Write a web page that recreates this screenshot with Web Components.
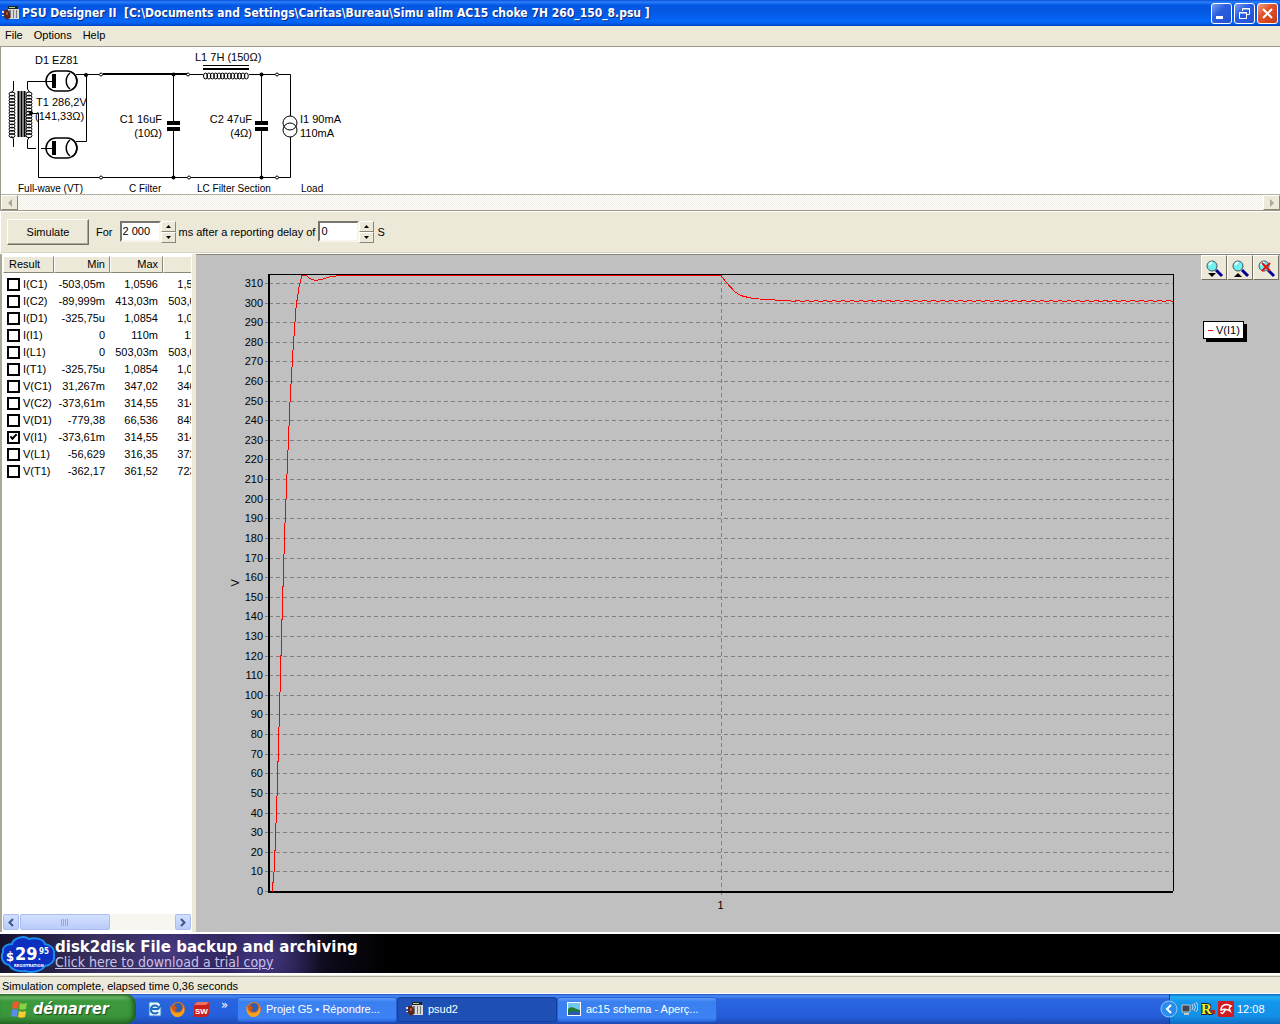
<!DOCTYPE html>
<html lang="fr">
<head>
<meta charset="utf-8">
<title>PSU Designer II</title>
<style>
  html, body { height: 100%; margin: 0; }
  body {
    display: flex;
    flex-direction: column;
    background: #ece9d8;
    color: #000;
    font-family: "Liberation Sans", Arial, sans-serif;
    font-size: 11px;
    line-height: 14px;
    overflow: hidden;
    --ui: "DejaVu Sans Condensed", "DejaVu Sans", sans-serif;
  }
  main { flex: 1; display: flex; min-height: 0; border-top: 1px solid #fff; }
  psu-chart { flex: 1; min-width: 0; }
</style>
</head>
<body>
<psu-titlebar>PSU Designer II  [C:\Documents and Settings\Caritas\Bureau\Simu alim AC15 choke 7H 260_150_8.psu ]</psu-titlebar>
<psu-menu></psu-menu>
<psu-schematic></psu-schematic>
<psu-toolbar></psu-toolbar>
<main>
  <psu-results></psu-results>
  <psu-chart></psu-chart>
</main>
<psu-banner></psu-banner>
<psu-status>Simulation complete, elapsed time 0,36 seconds</psu-status>
<xp-taskbar></xp-taskbar>

<script>
const psuIcon = `<svg width="18" height="18" viewBox="0 0 18 18">
  <path d="M6 2h10v3H6z" fill="#222"/><path d="M7 3h6v1H7z" fill="#9fd0a0"/>
  <path d="M6 5h11v10H6z" fill="#d8d8d8"/><path d="M7 6h2v8H7zM11 6h1v8h-1zM14 6h1v8h-1z" fill="#777"/>
  <path d="M0 7h3v2H0zM0 11h3v1H0z" fill="#ddd"/><path d="M2 6h4l2 3v5l-3 2-3-3z" fill="#5b241c"/>
  <path d="M4 8h2v3H4z" fill="#a5543c"/></svg>`;

const firefoxIcon = `<svg width="16" height="16" viewBox="0 0 16 16">
  <circle cx="8" cy="8" r="7" fill="#e8731a"/><circle cx="8" cy="6.500" r="4.500" fill="#2f5fb0"/>
  <path d="M1 4c0 7 3 9 7 8 4 0 5-3 5-6 2 2 2 9-5 10C2 16-1 10 1 4z" fill="#f6a21d"/>
  <path d="M2 5c2-1 4 0 5 2l-2 3c-2 0-3-2-3-5z" fill="#d94f12"/></svg>`;

class BaseElement extends HTMLElement {
  connectedCallback() {
    if (!this.shadowRoot) {
      this.attachShadow({ mode: 'open' });
      this.shadowRoot.innerHTML = this.render();
    }
    if (this.ready) this.ready();
  }
}

class PsuTitlebar extends BaseElement {
  render() {
    return `
      <style>
        :host {
          display: flex;
          align-items: center;
          height: 26px;
          flex: none;
          box-sizing: border-box;
          padding: 0 2px;
          color: #fff;
          background: linear-gradient(#0a4fd8, #2a80fb 2px, #0558e4 5px, #0557e2 11px, #0467f8 21px, #0560f0 23px, #0344c0);
        }
        h1 {
          flex: 1;
          margin: 0 0 0 2px;
          font: bold 12px/16px var(--ui);
          white-space: pre;
          text-shadow: 1px 1px 0 #0f2a80;
        }
        button {
          width: 21px;
          height: 21px;
          margin-left: 2px;
          padding: 0;
          border: 1px solid #fff;
          border-radius: 3px;
          background: linear-gradient(135deg, #7d9ff0, #2a5fe0 40%, #2450d0);
        }
        .close { background: linear-gradient(135deg, #f0a080, #e0532c 40%, #c83a14); }
        svg { display: block; }
      </style>
      ${psuIcon}
      <h1><slot></slot></h1>
      <button aria-label="Minimize"><svg width="19" height="19"><path d="M4 12h7v3H4z" fill="#fff"/></svg></button>
      <button aria-label="Restore"><svg width="19" height="19" fill="none" stroke="#fff"><path d="M7.500 7V4.500h7v6H12M7 5h8M4.500 8.500h7v6h-7zM4 9h8"/></svg></button>
      <button class="close" aria-label="Close"><svg width="19" height="19" stroke="#fff" stroke-width="2"><path d="M5 5l9 9M14 5l-9 9"/></svg></button>
    `;
  }
}

class PsuMenu extends BaseElement {
  render() {
    return `
      <style>
        :host { display: flex; flex: none; height: 18px; align-items: center; gap: 11px; padding: 0 5px 2px; }
        button { border: 0; padding: 0; background: none; color: inherit; font: 11px/14px "Liberation Sans", sans-serif; }
      </style>
      <button>File</button><button>Options</button><button>Help</button>
    `;
  }
}

class PsuSchematic extends BaseElement {
  // a row or column of small overlapping loops
  coil(x, y, count, step, rx, ry, vertical) {
    let out = '';
    for (let i = 0; i < count; i++) {
      const cx = vertical ? x : x + i * step;
      const cy = vertical ? y + i * step : y;
      out += `<ellipse cx="${cx}" cy="${cy}" rx="${rx}" ry="${ry}"/>`;
    }
    return out;
  }

  tube(y) {
    return `<rect x="46" y="${y - 10}" width="31" height="20" rx="10" fill="#fff" stroke-width="1.500"/>
      <rect x="52" y="${y - 7}" width="4" height="14" fill="#000" stroke="none"/>
      <path d="M41 ${y + 0.5}H52"/>
      <path d="M70 ${y - 8}c-5 4-5 12 0 16M73 ${y - 8}c5 4 5 12 0 16" stroke-width="1.500"/>`;
  }

  cap(x) {
    return `<path d="M${x} 74.500V121M${x} 131V177.500"/>
      <path d="M${x - 6.5} 121h13v4h-13zM${x - 6.5} 127h13v4h-13z" fill="#000" stroke="none"/>`;
  }

  render() {
    const nodes = [[101, 74], [188, 74], [277, 74], [101, 177], [189, 177], [277, 177]];
    const joints = [[86, 75], [173.5, 74.5], [261.5, 74.5], [31, 113], [173.5, 177.5], [261.5, 177.5]];
    return `
      <style>
        :host { display: block; flex: none; background: #fff; border-top: 1px solid #9d9a8c; border-left: 1px solid #9d9a8c; }
        .view { display: block; }
        text { font: 11px "Liberation Sans", sans-serif; fill: #000; stroke: none; }
        .names text { font-size: 10px; }
        .track {
          display: flex;
          justify-content: space-between;
          height: 15px;
          border-top: 1px solid #b5b2a4;
          border-bottom: 1px solid #9d9a8c;
          background: repeating-conic-gradient(#fff 0 25%, #f0eee2 0 50%) 0 0 / 2px 2px;
        }
        button {
          width: 17px;
          padding: 0;
          background: #ece9d8;
          border: 1px solid;
          border-color: #fff #8a8778 #8a8778 #fff;
          display: grid;
          place-items: center;
        }
      </style>
      <svg class="view" width="360" height="147" viewBox="1 47 360 147" fill="none" stroke="#000">
        <path d="M76 74.500H99M190 74.500h13M249 74.500h26M279 74.500h11.500V116M290.500 137v40.500H279"/>
        <path d="M103 74H187" stroke-width="2"/>
        <path d="M86.500 74v67.500H76M13.500 81v9l-2 3M13.500 147v-8l-2-3M41 81.500H27.500V89l2 3M36 148.500h-8.500V140l2-3M31 113.500h7.500v64H99M103 177.500H187M191 177.500h84"/>
        <path d="M18.500 91v46M21.500 91v46M24.500 91v46" stroke-width="2"/>
        ${this.coil(12, 94, 14, 3.2, 3, 2, true)}
        ${this.coil(29, 94, 14, 3.2, 3, 2, true)}
        ${this.tube(81)}${this.tube(148)}
        ${this.cap(173.5)}${this.cap(261.5)}
        <path d="M203 65.500h46"/><path d="M203 69h46" stroke-width="2"/>
        ${this.coil(205.5, 76, 13, 3.4, 2, 3, false)}
        <circle cx="290" cy="123" r="7"/><circle cx="290" cy="130" r="7"/>
        ${nodes.map(n => `<circle cx="${n[0]}" cy="${n[1] + 0.5}" r="1.500" fill="#fff"/>`).join('')}
        ${joints.map(n => `<circle cx="${n[0]}" cy="${n[1]}" r="2" fill="#000" stroke="none"/>`).join('')}
        <text x="35" y="64">D1 EZ81</text>
        <text x="36" y="106">T1 286,2V</text>
        <text x="35" y="120">(141,33Ω)</text>
        <g text-anchor="end">
          <text x="162" y="123">C1 16uF</text><text x="162" y="137">(10Ω)</text>
          <text x="252" y="123">C2 47uF</text><text x="252" y="137">(4Ω)</text>
        </g>
        <text x="195" y="61">L1 7H (150Ω)</text>
        <text x="300" y="123">I1 90mA</text><text x="300" y="137">110mA</text>
        <g class="names">
          <text x="18" y="192">Full-wave (VT)</text>
          <text x="129" y="192">C Filter</text>
          <text x="197" y="192">LC Filter Section</text>
          <text x="301" y="192">Load</text>
        </g>
      </svg>
      <div class="track">
        <button aria-label="Scroll left"><svg width="4" height="8"><path d="M4 0v8L0 4z" fill="#aca899"/></svg></button>
        <button aria-label="Scroll right"><svg width="4" height="8"><path d="M0 0v8l4-4z" fill="#aca899"/></svg></button>
      </div>
    `;
  }
}

class SpinField extends BaseElement {
  render() {
    return `
      <style>
        :host { display: flex; }
        input {
          width: 41px;
          height: 21px;
          box-sizing: border-box;
          padding: 0 1px 1px;
          border: 2px solid;
          border-color: #77746a #f6f5ee #f6f5ee #77746a;
          background: #fff;
          font: 11px/16px "Liberation Sans", sans-serif;
        }
        div { display: flex; flex-direction: column; }
        button {
          width: 15px;
          height: 11px;
          padding: 0;
          display: grid;
          place-items: center;
          background: #ece9d8;
          border: 1px solid;
          border-color: #fff #8a8778 #8a8778 #fff;
        }
      </style>
      <input aria-label="${this.getAttribute('label')}" value="${this.getAttribute('value')}">
      <div>
        <button aria-label="Up"><svg width="5" height="3"><path d="M0 3h5L2.500 0z"/></svg></button>
        <button aria-label="Down"><svg width="5" height="3"><path d="M0 0h5L2.500 3z"/></svg></button>
      </div>
    `;
  }
}

class PsuToolbar extends BaseElement {
  render() {
    return `
      <style>
        :host {
          display: flex;
          flex: none;
          align-items: center;
          gap: 3px;
          box-sizing: border-box;
          height: 42px;
          padding: 0 0 0 6px;
          border-top: 1px solid #fff;
          border-left: 1px solid #fff;
          border-bottom: 1px solid #d8d5c5;
        }
        .run {
          width: 82px;
          height: 26px;
          background: #ece9d8;
          border: 1px solid;
          border-color: #fff #716f64 #716f64 #fff;
          box-shadow: inset -1px -1px #aca899;
          font: 11px/14px "Liberation Sans", sans-serif;
        }
        .for { margin: 0 4px; }
      </style>
      <button class="run">Simulate</button>
      <span class="for">For</span>
      <spin-field label="Duration in ms" value="2 000"></spin-field>
      <span>ms</span>
      <span>after a reporting delay of</span>
      <spin-field label="Reporting delay in seconds" value="0"></spin-field>
      <span>S</span>
    `;
  }
}

class PsuResults extends BaseElement {
  render() {
    const rows = [
      ['I(C1)', '-503,05m', '1,0596', '1,5627'],
      ['I(C2)', '-89,999m', '413,03m', '503,03m'],
      ['I(D1)', '-325,75u', '1,0854', '1,0857'],
      ['I(I1)', '0', '110m', '110m'],
      ['I(L1)', '0', '503,03m', '503,03m'],
      ['I(T1)', '-325,75u', '1,0854', '1,0857'],
      ['V(C1)', '31,267m', '347,02', '346,99'],
      ['V(C2)', '-373,61m', '314,55', '314,92'],
      ['V(D1)', '-779,38', '66,536', '845,92'],
      ['V(I1)', '-373,61m', '314,55', '314,92'],
      ['V(L1)', '-56,629', '316,35', '372,98'],
      ['V(T1)', '-362,17', '361,52', '723,69']
    ];
    return `
      <style>
        :host {
          display: flex;
          flex-direction: column;
          box-sizing: border-box;
          width: 196px;
          padding: 2px 5px 2px 1px;
          border-left: 2px solid #aca899;
          background: linear-gradient(90deg, #fff 190px, #ece9d8 0);
        }
        .clip { flex: 1; min-height: 0; overflow: hidden; background: #fff; }
        table { width: 213px; table-layout: fixed; border-collapse: separate; border-spacing: 0; }
        th, td { height: 17px; box-sizing: border-box; padding: 0 5px 0 0; text-align: right; font-weight: normal; white-space: nowrap; line-height: 15px; }
        th {
          background: #ece9d8;
          border: 1px solid;
          border-color: #fff #8a8778 #8a8778 #fff;
          padding-right: 4px;
        }
        th:first-child { text-align: left; padding-left: 5px; }
        td:first-child { text-align: left; padding: 0 0 0 4px; }
        tbody::before { content: ""; display: block; height: 3px; }
        label { display: flex; align-items: center; gap: 3px; }
        input {
          appearance: none;
          flex: none;
          width: 13px;
          height: 13px;
          margin: 0;
          border: 2px solid #000;
          background: #fff;
        }
        input:checked::after {
          content: "";
          display: block;
          box-sizing: border-box;
          width: 7px;
          height: 4px;
          margin: 1px;
          border: solid #000;
          border-width: 0 0 2px 2px;
          transform: rotate(-45deg);
        }
        .scroll { display: flex; height: 16px; background: #f7f6f0; gap: 1px; }
        button {
          width: 16px;
          height: 16px;
          padding: 0;
          display: grid;
          place-items: center;
          border: 1px solid #a9bdf0;
          border-radius: 2px;
          background: linear-gradient(#d4e0ff, #b8ccf8);
        }
        .thumb { width: 90px; flex: none; }
        .scroll button:last-child { margin-left: auto; }
      </style>
      <div class="clip">
        <table>
          <colgroup><col style="width:51px"><col style="width:56px"><col style="width:53px"><col></colgroup>
          <thead><tr><th>Result</th><th>Min</th><th>Max</th><th>Diff</th></tr></thead>
          <tbody>
            ${rows.map(r => `<tr>
              <td><label><input type="checkbox" ${r[0] === 'V(I1)' ? 'checked' : ''}>${r[0]}</label></td>
              <td>${r[1]}</td><td>${r[2]}</td><td>${r[3]}</td>
            </tr>`).join('')}
          </tbody>
        </table>
      </div>
      <div class="scroll">
        <button aria-label="Scroll left"><svg width="6" height="9" fill="none" stroke="#3f5590" stroke-width="2"><path d="M5 1L1.500 4.500 5 8"/></svg></button>
        <button class="thumb" aria-label="Scroll thumb"><svg width="9" height="7" stroke="#8ca6e8"><path d="M.5 0v7M2.500 0v7M4.500 0v7M6.500 0v7"/></svg></button>
        <button aria-label="Scroll right"><svg width="6" height="9" fill="none" stroke="#3f5590" stroke-width="2"><path d="M1 1l3.500 3.500L1 8"/></svg></button>
      </div>
    `;
  }
}

class PsuChart extends BaseElement {
  render() {
    const lens = extra => `<svg width="22" height="22" viewBox="0 0 22 22">
      <path d="M13 13l6 6" stroke="#000090" stroke-width="3"/>
      <circle cx="9" cy="9" r="5" fill="#6ff0f0" stroke="#456" />
      <path d="M6 8l3-3" stroke="#fff" stroke-width="2"/>${extra}</svg>`;
    return `
      <style>
        :host { display: flex; background: #c0c0c0; border-top: 1px solid #8a8778; box-sizing: border-box; }
        .plot { flex: 1; min-width: 0; overflow: hidden; }
        .plot svg { display: block; width: 100%; height: 100%; }
        .side { width: 79px; }
        .tools { display: flex; }
        .tools button {
          width: 26px;
          height: 25px;
          padding: 0;
          display: grid;
          place-items: center;
          background: #ece9d8;
          border: 1px solid;
          border-color: #fff #716f64 #716f64 #fff;
        }
        .legend {
          display: inline-flex;
          align-items: center;
          gap: 3px;
          margin: 41px 0 0 2px;
          padding: 1px 3px 1px 4px;
          border: 1px solid #000;
          background: #fff;
          box-shadow: 3px 3px #000;
        }
        .legend i { width: 5px; height: 1px; background: #f00; }
        text { font: 11px "Liberation Sans", sans-serif; }
      </style>
      <div class="plot"><svg></svg></div>
      <div class="side">
        <div class="tools">
          <button aria-label="Zoom out">${lens('<path d="M5 16h8l-4 4z"/>')}</button>
          <button aria-label="Zoom in">${lens('<path d="M5 20h8l-4-4z"/>')}</button>
          <button aria-label="Reset zoom">${lens('<path d="M7 6l8 8M15 6l-8 8" stroke="#e01010" stroke-width="2"/>')}</button>
        </div>
        <div class="legend"><i></i>V(I1)</div>
      </div>
    `;
  }

  ready() {
    this.draw();
    this.observer = new ResizeObserver(() => this.draw());
    this.observer.observe(this);
  }

  draw() {
    const svg = this.shadowRoot.querySelector('.plot svg');
    const box = svg.parentNode.getBoundingClientRect();
    const left = 73, top = 19;
    const right = Math.round(box.width) - 28;
    const bottom = Math.round(box.height) - 41;
    const max = 314.55;
    const px = t => left + (right - left) * t / 2;
    const py = v => bottom - (bottom - top) * v / max;

    let grid = '', labels = '';
    for (let v = 0; v <= 310; v += 10) {
      const y = Math.round(py(v)) + 0.5;
      grid += `<path d="M${left - 4} ${y}h4" stroke="#808080"/><path d="M${left} ${y}H${right}" stroke="#808080" stroke-dasharray="4 3"/>`;
      labels += `<text x="${left - 6}" y="${y + 3.5}" text-anchor="end">${v}</text>`;
    }

    // start-up, slight overshoot, then the load step at 1 s
    const curve = [
      [0.007, 0], [0.012, 12], [0.018, 50], [0.024, 98], [0.029, 140], [0.035, 185], [0.042, 225],
      [0.047, 252], [0.053, 276], [0.06, 298], [0.067, 309], [0.073, 314], [0.082, 314],
      [0.09, 312.5], [0.102, 311.5], [0.117, 312], [0.135, 313.3], [0.16, 314], [1, 314],
      [1.01, 311], [1.02, 308.4], [1.03, 306], [1.043, 304], [1.07, 302.3], [1.1, 301.6], [1.14, 301.4]
    ];
    for (let i = 115; i <= 200; i++) curve.push([i / 100, i % 2 ? 301.4 : 300.9]);
    const line = curve.map(p => `${px(p[0]).toFixed(1)},${Math.round(py(p[1])) + 0.5}`).join(' ');
    const mid = Math.round(px(1)) + 0.5;

    svg.innerHTML = `
      <g shape-rendering="crispEdges">${grid}
        <path d="M${mid} ${top}V${bottom}" stroke="#808080" stroke-dasharray="4 3"/>
        <path d="M${mid} ${bottom}v4" stroke="#808080"/>
        <path d="M${left} ${top + 0.5}H${right + 0.5}V${bottom}" fill="none" stroke="#000"/>
        <path d="M${left} ${top}V${bottom + 1}H${right}" fill="none" stroke="#000" stroke-width="2"/>
      </g>
      <polyline points="${line}" fill="none" stroke="#f00" shape-rendering="crispEdges"/>
      ${labels}
      <text x="${mid - 1}" y="${bottom + 18}" text-anchor="middle">1</text>
      <text transform="translate(${left - 30} ${(top + bottom) / 2 + 4}) rotate(-90)">V</text>
    `;
  }
}

class PsuBanner extends BaseElement {
  render() {
    return `
      <style>
        :host {
          display: flex;
          flex: none;
          align-items: center;
          height: 39px;
          border-top: 2px solid #fff;
          border-bottom: 2px solid #fff;
          background:
            radial-gradient(ellipse 60px 40px at 170px 16px, #56459c99, transparent),
            radial-gradient(ellipse 50px 40px at 270px 24px, #4f3f9499, transparent),
            linear-gradient(90deg, #16122c, #3a3160 100px, #2b2458 200px, #332a68 260px, #0c0a18 330px, #000 390px);
          color: #fff;
        }
        a { display: flex; align-items: center; color: inherit; text-decoration: none; }
        .logo { flex: none; }
        .copy { padding-top: 2px; }
        strong { display: block; font: bold 15px/14px "DejaVu Sans", sans-serif; white-space: nowrap; }
        u { display: block; font: 14px/16px var(--ui); color: #c8c2e8; white-space: nowrap; }
        text { font-family: var(--ui); font-weight: bold; fill: #fff; }
      </style>
      <a href="#">
        <svg class="logo" width="55" height="38" viewBox="0 0 55 38">
          <path d="M3 17C2 11 8 9 12 9c1-6 12-9 17-5 6-2 15 0 16 5 6 1 10 5 9 11 1 6-3 10-9 11-4 6-14 7-20 5-8 1-14-2-16-6-6-1-9-7-6-13z" fill="#0b2fc0" stroke="#1b8cf0" stroke-width="2"/>
          <text x="6" y="26" font-size="13">$</text>
          <text x="15" y="25" font-size="18">29</text>
          <text x="39" y="19" font-size="8">95</text>
          <text x="38" y="25" font-size="8">.</text>
          <text x="14" y="32" font-size="4">REGISTRATION</text>
        </svg>
        <span class="copy"><strong>disk2disk File backup and archiving</strong><u>Click here to download a trial copy</u></span>
      </a>
    `;
  }
}

class PsuStatus extends BaseElement {
  render() {
    return `
      <style>
        :host {
          display: block;
          flex: none;
          height: 16px;
          margin-top: 1px;
          padding-left: 2px;
          border-top: 1px solid #aca899;
          border-bottom: 1px solid #fff;
          line-height: 18px;
        }
      </style>
      <slot></slot>
    `;
  }
}

class XpTask extends BaseElement {
  render() {
    return `
      <style>
        :host { display: block; width: 160px; }
        button {
          display: flex;
          align-items: center;
          gap: 4px;
          width: 100%;
          height: 25px;
          padding: 0 8px;
          border: 1px solid #2a62d8;
          border-radius: 3px;
          background: linear-gradient(#5a9cf8, #3a80f0 4px, #3c82f4 20px, #2c6ce0);
          color: #fff;
          font: 11px/14px "Liberation Sans", sans-serif;
          white-space: nowrap;
        }
        :host([active]) button { background: #1e4fb4; border-color: #143c98; }
      </style>
      <button><slot name="icon"></slot><slot></slot></button>
    `;
  }
}

class XpTaskbar extends BaseElement {
  render() {
    return `
      <style>
        :host {
          display: flex;
          flex: none;
          align-items: center;
          height: 30px;
          background: linear-gradient(#1f4fc0, #4a8cf4 2px, #2b66e0 5px, #245edb 22px, #1c48b0);
          color: #fff;
        }
        .start {
          display: flex;
          align-items: center;
          gap: 4px;
          width: 136px;
          height: 30px;
          padding: 0 0 0 10px;
          border: 0;
          border-radius: 0 10px 10px 0;
          background: linear-gradient(#2f7a2f, #6bb86b 3px, #3c9a3c 7px, #3a953a 22px, #2a702a);
          box-shadow: inset -3px 0 4px #1e5c1e;
          color: #fff;
          font: italic bold 16px/20px "DejaVu Sans Condensed", sans-serif;
          text-shadow: 1px 1px 1px #1c4a1c;
        }
        .quick { display: flex; align-items: center; gap: 7px; width: 90px; padding-left: 11px; }
        .quick span { align-self: flex-start; margin-left: 4px; font: 13px/8px var(--ui); }
        .tray {
          display: flex;
          align-items: center;
          gap: 3px;
          margin-left: auto;
          box-sizing: border-box;
          width: 111px;
          height: 30px;
          border-left: 1px solid #0c3e98;
          background: linear-gradient(#0c6ac8, #24b0f4 3px, #1396ec 8px, #1290e8 22px, #0f6cc0);
        }
        .tray svg:first-child { margin-left: -10px; }
        text { font-weight: bold; }
      </style>
      <button class="start">
        <svg width="19" height="19" viewBox="0 0 19 19">
          <path d="M3 2c2-1 4-1 6 0L8 9c-2-1-4-1-6 0z" fill="#ee5a2a"/><path d="M10 3c2 1 4 1 7 0l-1 6c-3 1-5 1-7 0z" fill="#8cd040"/>
          <path d="M2 10c2-1 4-1 6 0l-1 7c-2-1-4-1-6 0z" fill="#5a8cf0"/><path d="M9 11c2 1 4 1 7 0l-1 6c-3 1-5 1-7 0z" fill="#fccc30"/>
        </svg>démarrer
      </button>
      <div class="quick">
        <svg width="16" height="16" viewBox="0 0 16 16"><path d="M2 1h9l3 3v11H2z" fill="#e8f4ff" stroke="#2a7cc8"/><path d="M11 6a4 4 0 1 0 0 5M5 8h6l4-5" fill="none" stroke="#1c6cc0" stroke-width="2"/></svg>
        ${firefoxIcon}
        <svg width="17" height="17" viewBox="0 0 17 17"><path d="M1 4l3-3h12v12l-3 3H1z" fill="#c8201c"/><path d="M1 4l3-3h12l-3 3z" fill="#f07060"/><text x="2" y="13" font-size="8" fill="#fff">SW</text></svg>
        <span>»</span>
      </div>
      <xp-task>${firefoxIcon.replace('<svg', '<svg slot="icon"')}Projet G5 • Répondre...</xp-task>
      <xp-task active>${psuIcon.replace('<svg', '<svg slot="icon"')}psud2</xp-task>
      <xp-task><svg slot="icon" width="16" height="16" viewBox="0 0 16 16"><path d="M1 1h14v14H1z" fill="#fff"/><path d="M2 2h12v12H2z" fill="#70c8f0"/><path d="M2 8c4-4 6 0 12 1v5H2z" fill="#207a30"/><path d="M2 12c5-3 8 0 12-2v4H2z" fill="#2a58b0"/></svg>ac15 schema - Aperç...</xp-task>
      <div class="tray">
        <svg width="18" height="18" viewBox="0 0 18 18"><circle cx="9" cy="9" r="8" fill="#2a8cec" stroke="#8cc8fc"/><path d="M11 5L7 9l4 4" fill="none" stroke="#fff" stroke-width="2"/></svg>
        <svg width="17" height="16" viewBox="0 0 17 16"><path d="M1 4h8v7H1z" fill="#445" stroke="#bcc"/><path d="M3 12h5v2H3z" fill="#bcc"/><path d="M11 3q2 3 0 6M13 2q3 4 0 8M15 1q4 5 0 10" fill="none" stroke="#c8d8e8"/></svg>
        <svg width="14" height="16" viewBox="0 0 14 16"><text x="0" y="13" font-size="15" font-family="Liberation Serif, serif" fill="#f4f020" stroke="#222" stroke-width="2" paint-order="stroke">R</text><path d="M10 9l3 3M13 9v4" stroke="#c02010" stroke-width="2"/></svg>
        <svg width="16" height="16" viewBox="0 0 16 16"><rect width="16" height="16" rx="1" fill="#d01c20"/><path d="M3 9C3 4 8 2 13 5c-2 1-2 3-1 5-3-2-6-2-9-1zM8 8l-3 4c-1 1-2 0-2-1" fill="none" stroke="#fff" stroke-width="1.500"/></svg>
        <time>12:08</time>
      </div>
    `;
  }
}

customElements.define('psu-titlebar', PsuTitlebar);
customElements.define('psu-menu', PsuMenu);
customElements.define('psu-schematic', PsuSchematic);
customElements.define('spin-field', SpinField);
customElements.define('psu-toolbar', PsuToolbar);
customElements.define('psu-results', PsuResults);
customElements.define('psu-chart', PsuChart);
customElements.define('psu-banner', PsuBanner);
customElements.define('psu-status', PsuStatus);
customElements.define('xp-task', XpTask);
customElements.define('xp-taskbar', XpTaskbar);
</script>
</body>
</html>
